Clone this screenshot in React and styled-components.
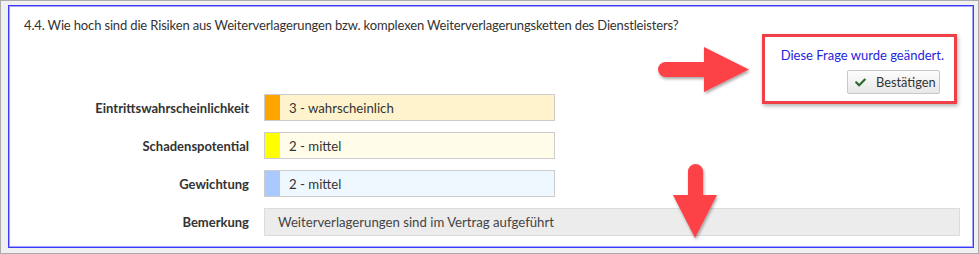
import React from "react";
import styled, { createGlobalStyle } from "styled-components";
import { FaCheck } from "react-icons/fa";

const GlobalStyle = createGlobalStyle`
  body {
    margin: 0;
    background: #ffffff;
    font-family: "Lato", "Liberation Sans", sans-serif;
  }
`;

const ANNOTATION_RED = "#fc4247";

const RATINGS = [
  { label: "Eintrittswahrscheinlichkeit", value: "3 - wahrscheinlich", swatch: "#ffa500", tint: "#fff3cd" },
  { label: "Schadenspotential", value: "2 - mittel", swatch: "#ffff00", tint: "#fffde9" },
  { label: "Gewichtung", value: "2 - mittel", swatch: "#a9c9ff", tint: "#f0f8ff" },
];

const App = () => (
  <>
    <GlobalStyle />
    <Frame>
      <Panel>
        <Top>
          <LeftCol>
            <Question>
              4.4. Wie hoch sind die Risiken aus Weiterverlagerungen bzw. komplexen
              Weiterverlagerungsketten des Dienstleisters?
            </Question>
            <Rows>
              {RATINGS.map((r) => (
                <Row key={r.label}>
                  <Label>{r.label}</Label>
                  <RatingField $tint={r.tint}>
                    <Swatch $color={r.swatch} />
                    <FieldText>{r.value}</FieldText>
                  </RatingField>
                </Row>
              ))}
            </Rows>
          </LeftCol>
          <Highlight>
            <ChangedNote>Diese Frage wurde geändert.</ChangedNote>
            <ConfirmButton type="button">
              <FaCheck size={11} color="#2e6b2e" />
              Bestätigen
            </ConfirmButton>
          </Highlight>
        </Top>
        <Row>
          <Label>Bemerkung</Label>
          <CommentField>Weiterverlagerungen sind im Vertrag aufgeführt</CommentField>
        </Row>
      </Panel>
      <Arrows width="979" height="254" viewBox="0 0 979 254">
        <defs>
          <filter id="arrow-shadow" x="-20%" y="-20%" width="140%" height="140%">
            <feDropShadow dx="1" dy="2" stdDeviation="1.6" floodColor="#000" floodOpacity="0.35" />
          </filter>
        </defs>
        <g fill={ANNOTATION_RED} filter="url(#arrow-shadow)">
          <rect x="658" y="62" width="56" height="15" rx="7.5" />
          <polygon points="704,47 749,69.5 704,92" />
          <rect x="688" y="164" width="15" height="40" rx="7.5" />
          <polygon points="673,195 717,195 695,238" />
        </g>
      </Arrows>
    </Frame>
  </>
);

const Frame = styled.div`
  position: relative;
  box-sizing: border-box;
  width: 979px;
  height: 254px;
  padding: 4px 4px 5px 7px;
  border: 1px solid #acacac;
  background: #f0f0f0;
`;

const Panel = styled.div`
  box-sizing: border-box;
  height: 243px;
  padding: 9px 13px 0 0;
  display: flex;
  flex-direction: column;
  gap: 11px;
  background: #fff;
  border: 1px solid #3b3bff;
  box-shadow: inset 0 0 0 1px #a3a3ff;
`;

const Top = styled.div`
  display: flex;
  justify-content: space-between;
  align-items: flex-start;
`;

const LeftCol = styled.div`
  display: flex;
  flex-direction: column;
  gap: 59px;
`;

const Question = styled.div`
  padding-left: 15px;
  font-size: 13px;
  letter-spacing: -0.15px;
  line-height: 20px;
  color: #333;
  white-space: nowrap;
`;

const Rows = styled.div`
  display: flex;
  flex-direction: column;
  gap: 11px;
`;

const Row = styled.div`
  display: flex;
  align-items: center;
  gap: 15px;
`;

const Label = styled.div`
  width: 240px;
  flex: none;
  text-align: right;
  font-size: 13px;
  font-weight: 700;
  color: #333;
`;

const RatingField = styled.div`
  box-sizing: border-box;
  display: flex;
  align-items: stretch;
  width: 291px;
  height: 27px;
  border: 1px solid #cccccc;
  background: ${(p) => p.$tint};
`;

const Swatch = styled.span`
  width: 15px;
  flex: none;
  background: ${(p) => p.$color};
`;

const FieldText = styled.span`
  display: flex;
  align-items: center;
  padding-left: 9px;
  font-size: 13.2px;
  color: #333;
`;

const CommentField = styled.div`
  box-sizing: border-box;
  flex: 1;
  height: 28px;
  display: flex;
  align-items: center;
  padding-left: 13px;
  border: 1px solid #dcdcdc;
  background: #ececec;
  font-size: 13.2px;
  color: #444;
`;

const Highlight = styled.div`
  box-sizing: border-box;
  width: 195px;
  height: 70px;
  margin-top: 19px;
  margin-right: 3px;
  padding: 9px 10px 7px 0;
  display: flex;
  flex-direction: column;
  align-items: flex-end;
  justify-content: space-between;
  border: 3px solid #ef3f47;
  box-shadow: 1px 2px 4px rgba(0, 0, 0, 0.3);
`;

const ChangedNote = styled.div`
  font-size: 13px;
  line-height: 18px;
  white-space: nowrap;
  color: #2424dc;
`;

const ConfirmButton = styled.button`
  box-sizing: border-box;
  display: flex;
  align-items: center;
  gap: 10px;
  width: 93px;
  height: 24px;
  margin-right: 4px;
  padding: 0 0 0 7px;
  border: 1px solid #c8c8c8;
  border-radius: 2px;
  background: linear-gradient(#fdfdfd, #e8e8e8);
  font-family: inherit;
  font-size: 12.8px;
  color: #333;
`;

const Arrows = styled.svg`
  position: absolute;
  top: -1px;
  left: -1px;
  pointer-events: none;
`;

export default App;
